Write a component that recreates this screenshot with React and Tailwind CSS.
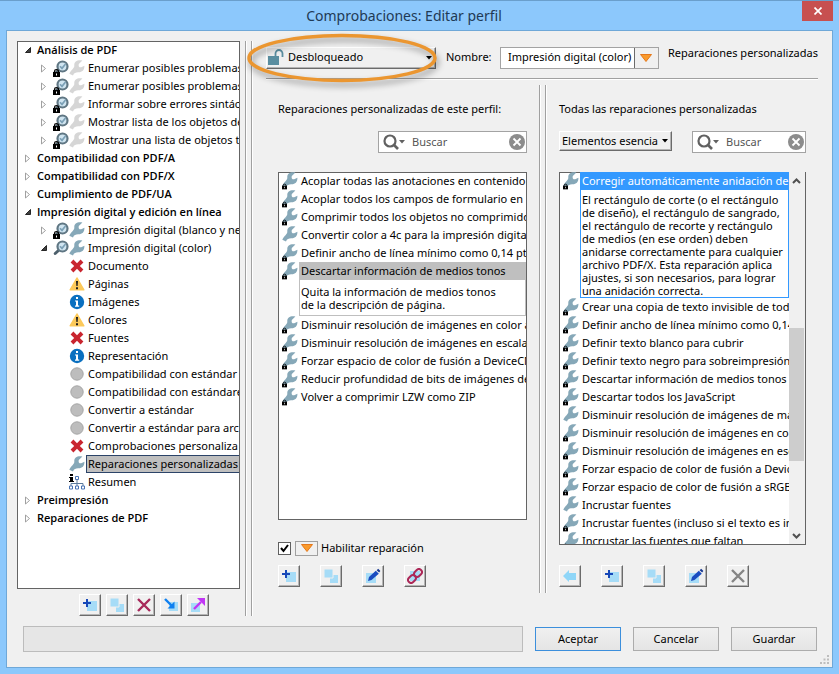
import React, { useState } from "react";
import clsx from "clsx";

const TREE = [
  { level: 0, label: "Análisis de PDF", open: true },
  { level: 1, label: "Enumerar posibles problemas de color", locked: true, dim: true },
  { level: 1, label: "Enumerar posibles problemas de fuentes", locked: true, dim: true },
  { level: 1, label: "Informar sobre errores sintácticos", locked: true, dim: true },
  { level: 1, label: "Mostrar lista de los objetos de imagen", locked: true, dim: true },
  { level: 1, label: "Mostrar una lista de objetos transparentes", locked: true, dim: true },
  { level: 0, label: "Compatibilidad con PDF/A" },
  { level: 0, label: "Compatibilidad con PDF/X" },
  { level: 0, label: "Cumplimiento de PDF/UA" },
  { level: 0, label: "Impresión digital y edición en línea", open: true },
  { level: 1, label: "Impresión digital (blanco y negro)", locked: true },
  { level: 1, label: "Impresión digital (color)", open: true },
  { level: 2, label: "Documento", icon: "error" },
  { level: 2, label: "Páginas", icon: "warning" },
  { level: 2, label: "Imágenes", icon: "info" },
  { level: 2, label: "Colores", icon: "warning" },
  { level: 2, label: "Fuentes", icon: "error" },
  { level: 2, label: "Representación", icon: "info" },
  { level: 2, label: "Compatibilidad con estándar", icon: "off" },
  { level: 2, label: "Compatibilidad con estándares", icon: "off" },
  { level: 2, label: "Convertir a estándar", icon: "off" },
  { level: 2, label: "Convertir a estándar para archivado", icon: "off" },
  { level: 2, label: "Comprobaciones personaliza", icon: "error" },
  { level: 2, label: "Reparaciones personalizadas", icon: "wrench" },
  { level: 2, label: "Resumen", icon: "summary" },
  { level: 0, label: "Preimpresión" },
  { level: 0, label: "Reparaciones de PDF" },
];

const PROFILE_FIXUPS = [
  { label: "Acoplar todas las anotaciones en contenido", locked: true },
  { label: "Acoplar todos los campos de formulario en", locked: true },
  { label: "Comprimir todos los objetos no comprimidos", locked: true },
  { label: "Convertir color a 4c para la impresión digital" },
  { label: "Definir ancho de línea mínimo como 0,14 pt", locked: true },
  {
    label: "Descartar información de medios tonos",
    locked: true,
    lines: ["Quita la información de medios tonos", "de la descripción de página."],
  },
  { label: "Disminuir resolución de imágenes en color a", locked: true },
  { label: "Disminuir resolución de imágenes en escala", locked: true },
  { label: "Forzar espacio de color de fusión a DeviceCMYK", locked: true },
  { label: "Reducir profundidad de bits de imágenes de", locked: true },
  { label: "Volver a comprimir LZW como ZIP", locked: true },
];

const ALL_FIXUPS = [
  {
    label: "Corregir automáticamente anidación de",
    locked: true,
    lines: [
      "El rectángulo de corte (o el rectángulo",
      "de diseño), el rectángulo de sangrado,",
      "el rectángulo de recorte y rectángulo",
      "de medios (en ese orden) deben",
      "anidarse correctamente para cualquier",
      "archivo PDF/X. Esta reparación aplica",
      "ajustes, si son necesarios, para lograr",
      "una anidación correcta.",
    ],
  },
  { label: "Crear una copia de texto invisible de todo", locked: true },
  { label: "Definir ancho de línea mínimo como 0,14 pt", locked: true },
  { label: "Definir texto blanco para cubrir", locked: true },
  { label: "Definir texto negro para sobreimpresión", locked: true },
  { label: "Descartar información de medios tonos", locked: true },
  { label: "Descartar todos los JavaScript", locked: true },
  { label: "Disminuir resolución de imágenes de mapa" },
  { label: "Disminuir resolución de imágenes en color", locked: true },
  { label: "Disminuir resolución de imágenes en escala", locked: true },
  { label: "Forzar espacio de color de fusión a DeviceCMYK", locked: true },
  { label: "Forzar espacio de color de fusión a sRGB", locked: true },
  { label: "Incrustar fuentes" },
  { label: "Incrustar fuentes (incluso si el texto es invisible)", locked: true },
  { label: "Incrustar las fuentes que faltan", locked: true },
];

/* ---------- icons ---------- */

function Wrench({ dim }) {
  return (
    <svg viewBox="0 0 16 16" className="w-4 h-4 shrink-0" aria-hidden="true">
      <path
        d="M13.400.6C8.600-.6 5 1.600 5.300 5.600 5.500 8.600 2.400 9.400.3 13.800L4 15.400C5 12.800 7 12.200 9.600 12.300 13.400 12.300 15.600 9.800 15.400 5.800L12.200 7.200C10.400 7.800 9.200 6.600 9.800 4Z"
        fill={dim ? "#d6d6d6" : "#86a8b8"}
      />
    </svg>
  );
}

function LockBadge({ className }) {
  return (
    <svg viewBox="0 0 7 8" className={clsx("absolute bottom-0 left-0", className)} aria-hidden="true">
      <path d="M1.500 4V2.200C1.500.2 5.500.2 5.500 2.200V4" fill="none" stroke="#000" strokeWidth="1.200" />
      <path d="M0 3h7v5H0z" fill="#000" />
      <path d="M3 4.500h1v2H3z" fill="#fff" />
    </svg>
  );
}

function Magnifier() {
  return (
    <svg viewBox="0 0 16 16" className="w-4 h-4" aria-hidden="true">
      <path d="M5.500 10.500 2.200 13.500" stroke="#4c5f6b" strokeWidth="3" strokeLinecap="round" />
      <circle cx="9.500" cy="6.500" r="5" fill="#cfe4f0" stroke="#5f7683" strokeWidth="2.200" />
      <path d="m7 6.200 2 2.200 3.500-4.400" fill="none" stroke="#7ba0b6" strokeWidth="1.700" />
    </svg>
  );
}

function StatusIcon({ name }) {
  if (name === "wrench") return <Wrench />;
  return (
    <svg viewBox="0 0 16 16" className="w-4 h-4 shrink-0" aria-hidden="true">
      {name === "error" && (
        <path d="M1.600 4.400 4.400 1.600 8 5.200 11.600 1.600 14.400 4.400 10.800 8 14.400 11.600 11.600 14.400 8 10.800 4.400 14.400 1.600 11.600 5.200 8Z" fill="#c9252f" />
      )}
      {name === "warning" && (
        <>
          <path d="M8 2 14.800 13.800H1.200Z" fill="#fcc95a" stroke="#fcc95a" strokeWidth="1.500" strokeLinejoin="round" />
          <path d="M7 5h2l-.4 5H7.400ZM7 11.200h2v2H7z" fill="#1c1c1c" />
        </>
      )}
      {name === "info" && (
        <>
          <circle cx="8" cy="8" r="7.200" fill="#0a70c0" />
          <path d="M7 3h2v2H7zM6 6.400h3v5.200h1.200v1.200H6v-1.200h1V7.600H6z" fill="#fff" />
        </>
      )}
      {name === "off" && <circle cx="8" cy="8" r="6.200" fill="#bdbdbd" stroke="#a6a6a6" />}
      {name === "summary" && (
        <>
          <path d="M1 0h3v2H1zM0 3h4v4h1v1H0V7h1V4H0z" fill="#000" />
          <path d="M8 5.500V9M2 12V9.500h12V12M8 9v3" fill="none" stroke="#5b7a9c" />
          <path d="M6.500 2.500h3v3h-3zM.5 12h3v3h-3zM6.500 12h3v3h-3zM12.500 12h3v3h-3z" fill="#fff" stroke="#4a74b4" />
        </>
      )}
    </svg>
  );
}

function ToolIcon({ name }) {
  return (
    <svg viewBox="0 0 16 16" className="w-4 h-4" aria-hidden="true">
      {name === "add" && (
        <>
          <path d="M5 4h10v10H5z" fill="#a6dcf7" />
          <path d="M5 2v8M1 6h8" stroke="#1748b8" strokeWidth="2" />
        </>
      )}
      {name === "copy" && (
        <>
          <path d="M7 7h8v8H7z" fill="#a6dcf7" />
          <path d="M1 1h9v9H1z" fill="#a6dcf7" stroke="#efefef" />
        </>
      )}
      {name === "delete" && <path d="m2 2 12 12M14 2 2 14" stroke="#a8285a" strokeWidth="2.400" />}
      {name === "delete-off" && <path d="m2 2 12 12M14 2 2 14" stroke="#858585" strokeWidth="2.400" />}
      {name === "import" && (
        <>
          <path d="M6 5h9v9H6z" fill="#a6dcf7" />
          <path d="m2 2 6.500 6.500" stroke="#0f80f0" strokeWidth="2.400" />
          <path d="M11.500 4.500v7h-7Z" fill="#0f80f0" />
        </>
      )}
      {name === "export" && (
        <>
          <path d="M1 6h9v9H1z" fill="#a6dcf7" />
          <path d="m4 12 7-7" stroke="#c136f5" strokeWidth="2.400" />
          <path d="M7 1h8v8Z" fill="#c136f5" />
        </>
      )}
      {name === "edit" && (
        <>
          <path d="M1 5h10v10H1z" fill="#a6dcf7" />
          <path d="m3 13 1-4 6.800-6.200 3 3L6.500 12Z" fill="#1a4cc0" />
          <path d="m11.600 2.200 1.600-1.400 2.200 2.200-1.300 1.600Z" fill="#1a3a90" />
        </>
      )}
      {name === "link" && (
        <>
          <path d="M3 3h10v10H3z" fill="#a6dcf7" />
          <g fill="none" stroke="#ac2858" strokeWidth="2" transform="rotate(-45 8 8)">
            <rect x="-.5" y="5" width="8.500" height="6" rx="3" />
            <rect x="8" y="5" width="8.500" height="6" rx="3" />
          </g>
        </>
      )}
      {name === "back" && <path d="m1 8 6-6v3h7v7H7v2Z" fill="#8fd6f8" />}
    </svg>
  );
}

function OrangeTriangle() {
  return (
    <svg viewBox="0 0 12 8" className="w-3 h-2" aria-hidden="true">
      <path d="M.5.500h11L6 7.500Z" fill="#f99a2c" stroke="#e5781a" />
    </svg>
  );
}

function Caret({ className }) {
  return (
    <svg viewBox="0 0 6 4" className={clsx("w-1.5 h-1", className)} aria-hidden="true">
      <path d="M0 0h6L3 3.500Z" fill="currentColor" />
    </svg>
  );
}

/* ---------- small controls ---------- */

function ToolButton({ icon, label }) {
  return (
    <button
      type="button"
      aria-label={label}
      className="flex items-center justify-center w-[22px] h-[22px] bg-[#f0f0f0] border border-t-white border-l-white border-r-[#6b6b6b] border-b-[#6b6b6b] shadow-[inset_-1px_-1px_0_#b4b4b4]"
    >
      <ToolIcon name={icon} />
    </button>
  );
}

function DialogButton({ children, primary }) {
  return (
    <button
      type="button"
      className={clsx(
        "w-[86px] h-6 border bg-linear-to-b from-[#f0f0f0] to-[#e5e5e5]",
        primary ? "border-[#3c8fdc]" : "border-[#acacac]"
      )}
    >
      {children}
    </button>
  );
}

function SearchBox({ label, className }) {
  return (
    <div className={clsx("flex items-center h-[22px] pl-1 pr-px bg-white border border-[#a3a3a3]", className)}>
      <svg viewBox="0 0 16 16" className="w-4 h-4 shrink-0" aria-hidden="true">
        <circle cx="7" cy="7" r="5.500" fill="none" stroke="#616161" strokeWidth="2.200" />
        <path d="m10.500 10.500 4.500 4.500" stroke="#616161" strokeWidth="2.600" />
      </svg>
      <Caret className="shrink-0 text-[#616161]" />
      <input
        type="text"
        aria-label={label}
        placeholder="Buscar"
        className="flex-1 min-w-0 ml-[7px] outline-none placeholder:text-[#555555]"
      />
      <button type="button" aria-label="Borrar búsqueda" className="shrink-0">
        <svg viewBox="0 0 16 16" className="w-4 h-4" aria-hidden="true">
          <circle cx="8" cy="8" r="8" fill="#8c8c8c" />
          <path d="m4.500 4.500 7 7M11.500 4.500l-7 7" stroke="#fff" strokeWidth="1.800" />
        </svg>
      </button>
    </div>
  );
}

function Splitter({ className }) {
  return (
    <div className={clsx("shrink-0 w-[7px] border-x border-[#a0a0a0] shadow-[1px_0_0_#ffffff,inset_1px_0_0_#ffffff]", className)} />
  );
}

/* ---------- lists ---------- */

function TreeRow({ item, selected, onSelect }) {
  const { level, label, open, locked, dim, icon } = item;
  return (
    <li
      role="treeitem"
      aria-selected={selected}
      aria-expanded={level < 2 ? Boolean(open) : undefined}
      onClick={onSelect}
      className={clsx("flex items-center h-[18px] whitespace-nowrap", level === 0 ? "pl-1.5" : "pl-[21px]")}
    >
      <span className={clsx("flex items-center shrink-0", level === 0 ? "w-[13px]" : "w-3.5 pl-px")}>
        {level < 2 && (
          <svg viewBox="0 0 8 9" className="w-2 h-[9px]" aria-hidden="true">
            {open ? (
              <path d="M6.500 1.500v5h-5Z" fill="#404040" stroke="#262626" />
            ) : (
              <path d="M1.500 1v7l4-3.500Z" fill="#fff" stroke="#a0a0a0" />
            )}
          </svg>
        )}
      </span>
      {level > 0 && (
        <span className="relative w-4 h-[18px] pt-px shrink-0">
          {level === 1 && <Magnifier />}
          {locked && <LockBadge className="w-[7px] h-2" />}
        </span>
      )}
      {level === 1 && <Wrench dim={dim} />}
      {level === 2 && <StatusIcon name={icon} />}
      <span
        className={clsx(
          "leading-4",
          level === 0 ? "font-['Open_Sans'] font-semibold" : "ml-px px-px border",
          level > 0 && (selected ? "border-[#2b4368] bg-[#bfbfbf]" : "border-transparent")
        )}
      >
        {label}
      </span>
    </li>
  );
}

function FixupList({ items, accent, label }) {
  return (
    <ul role="listbox" aria-label={label} className="flex-1 min-w-0 overflow-hidden">
      {items.map((item) => (
        <li key={item.label} role="option" aria-selected={Boolean(item.lines)} className="flex pl-[3px]">
          <span className="relative w-4 h-[18px] shrink-0">
            <Wrench />
            {item.locked && <LockBadge className="w-[5px] h-[7px]" />}
          </span>
          <div className="flex-1 min-w-0 ml-px whitespace-nowrap">
            <div
              className={clsx(
                "h-[18px] pl-0.5 leading-[18px]",
                item.lines && (accent ? "bg-[#3399ff] text-white" : "bg-[#bfbfbf]")
              )}
            >
              {item.label}
            </div>
            {item.lines && (
              <p
                className={clsx(
                  "pl-px border border-t-0 leading-[13px]",
                  accent ? "pt-[3px] border-[#3399ff]" : "pt-[5px] pb-1 border-[#bfbfbf]"
                )}
              >
                {item.lines.map((line) => (
                  <span key={line} className="block">{line}</span>
                ))}
              </p>
            )}
          </div>
        </li>
      ))}
    </ul>
  );
}

function ScrollBar() {
  return (
    <div className="flex flex-col w-4 pr-px shrink-0 bg-[#f0f0f0] text-[#505050]">
      <button type="button" aria-label="Subir" className="flex items-center justify-center h-[18px]">
        <svg viewBox="0 0 9 6" className="w-[9px] h-1.5"><path d="m1 5 3.500-3.500L8 5" fill="none" stroke="currentColor" strokeWidth="2" /></svg>
      </button>
      <div className="flex-[138]" />
      <div className="flex-[133] bg-[#cdcdcd]" />
      <div className="flex-[66]" />
      <button type="button" aria-label="Bajar" className="flex items-center justify-center h-[17px]">
        <svg viewBox="0 0 9 6" className="w-[9px] h-1.5"><path d="m1 1 3.500 3.500L8 1" fill="none" stroke="currentColor" strokeWidth="2" /></svg>
      </button>
    </div>
  );
}

/* ---------- panels ---------- */

function ProfileTree() {
  const [selected, setSelected] = useState("Reparaciones personalizadas");

  return (
    <div className="flex flex-col w-[223px] shrink-0">
      <ul
        role="tree"
        aria-label="Perfiles"
        className="flex-1 min-h-0 overflow-hidden bg-white border border-t-0 border-[#646464] shadow-[inset_0_1px_0_#646464]"
      >
        {TREE.map((item) => (
          <TreeRow
            key={item.label}
            item={item}
            selected={selected === item.label}
            onSelect={() => setSelected(item.label)}
          />
        ))}
      </ul>
      <div className="flex gap-[5px] mt-[5px] pl-[62px]">
        <ToolButton icon="add" label="Nuevo perfil" />
        <ToolButton icon="copy" label="Duplicar perfil" />
        <ToolButton icon="delete" label="Eliminar perfil" />
        <ToolButton icon="import" label="Importar perfil" />
        <ToolButton icon="export" label="Exportar perfil" />
      </div>
    </div>
  );
}

function ProfileHeader() {
  const [name, setName] = useState("Impresión digital (color)");

  return (
    <div className="flex items-center h-[38px] border-b border-[#a0a0a0] shadow-[0_1px_0_#ffffff]">
      <div className="relative w-[170px] h-[22px] mb-1">
        <select
          aria-label="Estado del perfil"
          className="w-full h-full pl-[21px] pr-4 appearance-none border border-t-white border-l-white border-r-[#6b6b6b] border-b-[#6b6b6b] shadow-[inset_-1px_-1px_0_#b4b4b4] outline-none"
        >
          <option>Desbloqueado</option>
          <option>Bloqueado</option>
        </select>
        <svg viewBox="0 0 16 16" className="absolute left-0.5 top-0.5 w-4 h-4 pointer-events-none" aria-hidden="true">
          <path d="M0 7h11v9H0z" fill="#5a8ea0" />
          <path d="M7.500 7V4.500a3.500 3.500 0 0 1 7 0V8" fill="none" stroke="#5a8ea0" strokeWidth="1.800" />
        </svg>
        <Caret className="absolute right-1 top-[9px] pointer-events-none" />
        {/* highlight ring around the lock state */}
        <svg
          viewBox="0 0 194 54"
          className="absolute -left-5 -top-4 w-[194px] h-[54px] overflow-visible pointer-events-none drop-shadow-[2px_4px_3px_rgba(0,0,0,0.4)]"
          aria-hidden="true"
        >
          <ellipse cx="96" cy="27" rx="93" ry="22.500" fill="none" stroke="#eb9630" strokeWidth="3.500" />
        </svg>
      </div>
      <label htmlFor="profile-name" className="ml-2.5 mb-1">Nombre:</label>
      <div className="flex w-[159px] h-[22px] ml-auto mb-1 bg-white border border-[#a3a3a3]">
        <input
          id="profile-name"
          type="text"
          value={name}
          onChange={(e) => setName(e.target.value)}
          className="flex-1 min-w-0 pl-[7px] outline-none"
        />
        <button type="button" aria-label="Más opciones" className="flex items-center justify-center w-6 border-l border-[#6b6b6b] bg-[#f0f0f0]">
          <OrangeTriangle />
        </button>
      </div>
      <h2 className="ml-[9px] mb-3 whitespace-nowrap">Reparaciones personalizadas</h2>
    </div>
  );
}

function ProfileFixups() {
  const [enabled, setEnabled] = useState(true);

  return (
    <section className="flex flex-col flex-[249] min-w-0 pt-[22px] pb-[29px]">
      <h3 className="h-4 leading-4 whitespace-nowrap">Reparaciones personalizadas de este perfil:</h3>
      <SearchBox label="Buscar en este perfil" className="w-[149px] mt-3.5 self-end" />
      <div className="flex flex-1 min-h-0 mt-[19px] bg-white border border-t-0 border-[#646464] shadow-[inset_0_1px_0_#646464]">
        <FixupList items={PROFILE_FIXUPS} label="Reparaciones de este perfil" />
      </div>
      <div className="flex items-center h-4 mt-5">
        <input
          id="enable-fixup"
          type="checkbox"
          checked={enabled}
          onChange={(e) => setEnabled(e.target.checked)}
          className="appearance-none w-[13px] h-[13px] bg-white border border-[#606060] checked:bg-[url('data:image/svg+xml,%3Csvg%20xmlns=%22http://www.w3.org/2000/svg%22%20viewBox=%220%200%2011%2011%22%3E%3Cpath%20d=%22M2%205l2.500%203L9%202%22%20fill=%22none%22%20stroke=%22black%22%20stroke-width=%222%22/%3E%3C/svg%3E')]"
        />
        <button type="button" aria-label="Opciones de reparación" className="flex items-center justify-center w-[23px] h-[15px] ml-1 border border-[#a0a0a0]">
          <OrangeTriangle />
        </button>
        <label htmlFor="enable-fixup" className="ml-[3px]">Habilitar reparación</label>
      </div>
      <div className="flex gap-5 mt-[9px]">
        <ToolButton icon="add" label="Nueva reparación" />
        <ToolButton icon="copy" label="Duplicar reparación" />
        <ToolButton icon="edit" label="Editar reparación" />
        <ToolButton icon="link" label="Desvincular reparación" />
      </div>
    </section>
  );
}

function AllFixups() {
  return (
    <section className="flex flex-col flex-[247] min-w-0 pt-[22px] pb-[29px]">
      <h3 className="h-4 leading-4 whitespace-nowrap">Todas las reparaciones personalizadas</h3>
      <div className="flex justify-between mt-3.5">
        <div className="relative w-[113px] h-5">
          <select
            aria-label="Filtro"
            className="w-full h-full pl-0.5 pr-3 appearance-none border border-t-white border-l-white border-r-[#6b6b6b] border-b-[#6b6b6b] shadow-[inset_-1px_-1px_0_#b4b4b4] outline-none"
          >
            <option>Elementos esencia</option>
          </select>
          <Caret className="absolute right-1 top-2 pointer-events-none" />
        </div>
        <SearchBox label="Buscar en todas" className="w-[114px]" />
      </div>
      <div className="flex flex-1 min-h-0 mt-[19px] bg-white border border-t-0 border-[#646464] shadow-[inset_0_1px_0_#646464]">
        <FixupList items={ALL_FIXUPS} label="Todas las reparaciones" accent />
        <ScrollBar />
      </div>
      <div className="flex gap-5 mt-5">
        <ToolButton icon="back" label="Añadir al perfil" />
        <ToolButton icon="add" label="Nueva reparación" />
        <ToolButton icon="copy" label="Duplicar reparación" />
        <ToolButton icon="edit" label="Editar reparación" />
        <ToolButton icon="delete-off" label="Eliminar reparación" />
      </div>
    </section>
  );
}

export default function App() {
  return (
    <div className="flex flex-col h-screen px-1.5 pb-1.5 bg-[#8cc8fc] border-t border-[#6a9fcc] text-[11px] text-black font-['Noto_Sans','Open_Sans',sans-serif]">
      <header className="relative flex items-center justify-center h-[29px] pr-[31px] shrink-0">
        <h1 className="text-sm text-[#1f3a55]">Comprobaciones: Editar perfil</h1>
        <button
          type="button"
          aria-label="Cerrar"
          className="absolute right-0 top-0 flex items-center justify-center w-[31px] h-5 bg-[#c75050]"
        >
          <svg viewBox="0 0 8 8" className="w-2 h-2" aria-hidden="true">
            <path d="m.5.500 7 7M7.500.500l-7 7" stroke="#fff" strokeWidth="1.700" />
          </svg>
        </button>
      </header>

      <main className="relative flex flex-col flex-1 min-h-0 pt-2.5 pb-[15px] bg-[#f0f0f0] border border-[#6fa8d8]">
        <div className="flex flex-1 min-h-0 pl-2.5 pr-3.5">
          <ProfileTree />
          <Splitter className="ml-[5px]" />
          <div className="flex flex-col flex-1 min-w-0 pl-3.5">
            <ProfileHeader />
            <div className="flex flex-1 min-h-0 px-3">
              <ProfileFixups />
              <Splitter className="ml-3 mr-[13px] mt-1.5 mb-[23px]" />
              <AllFixups />
            </div>
          </div>
        </div>

        <footer className="flex items-center gap-3 pl-4 pr-[15px] mt-2.5">
          <div className="flex-1 h-[26px] bg-[#e6e6e6] border border-[#bcbcbc]" />
          <DialogButton primary>Aceptar</DialogButton>
          <DialogButton>Cancelar</DialogButton>
          <DialogButton>Guardar</DialogButton>
        </footer>

        <svg viewBox="0 0 10 10" className="absolute right-0.5 bottom-0.5 w-2.5 h-2.5" aria-hidden="true">
          <path d="M7 0h2v2H7zM7 3.500h2v2H7zM3.500 3.500h2v2h-2zM7 7h2v2H7zM3.500 7h2v2h-2zM0 7h2v2H0z" fill="#bdbdbd" />
        </svg>
      </main>
    </div>
  );
}
